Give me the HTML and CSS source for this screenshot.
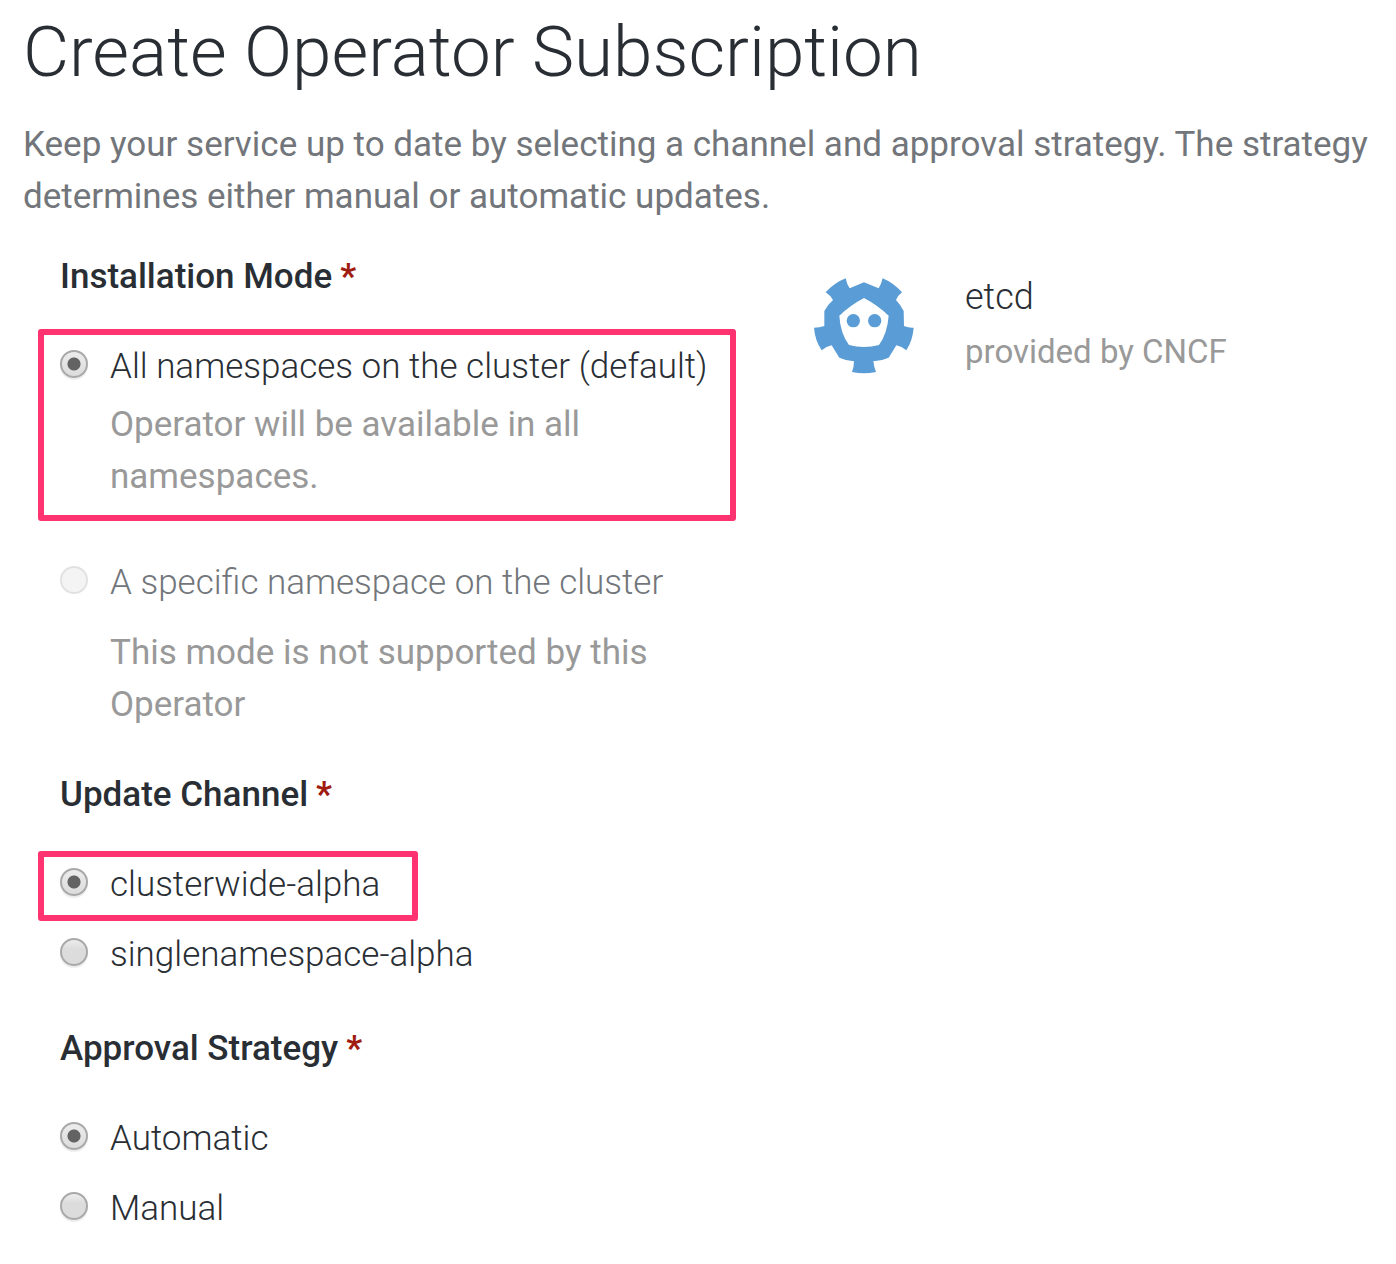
FILE: index.html
```html
<!DOCTYPE html>
<html lang="en">
<head>
<meta charset="utf-8">
<meta name="viewport" content="width=device-width, initial-scale=1">
<title>Create Operator Subscription</title>
<link rel="stylesheet" href="styles.css">
</head>
<body>
<main class="page">
  <h1 class="title">Create Operator Subscription</h1>
  <p class="intro">Keep your service up to date by selecting a channel and approval strategy. The strategy determines either manual or automatic updates.</p>
  <div class="columns">
    <form class="form">
      <fieldset class="group group-mode">
        <legend class="legend">Installation Mode<span class="required">*</span></legend>
        <div class="option highlight highlight-wide">
          <input class="radio" type="radio" name="mode" id="mode-all" checked>
          <div class="option-body">
            <label for="mode-all">All namespaces on the cluster (default)</label>
            <p class="help">Operator will be available in all namespaces.</p>
          </div>
        </div>
        <div class="option option-disabled">
          <input class="radio" type="radio" name="mode" id="mode-one" disabled>
          <div class="option-body">
            <label for="mode-one">A specific namespace on the cluster</label>
            <p class="help">This mode is not supported by this Operator</p>
          </div>
        </div>
      </fieldset>
      <fieldset class="group">
        <legend class="legend">Update Channel<span class="required">*</span></legend>
        <div class="option highlight">
          <input class="radio" type="radio" name="channel" id="channel-cluster" checked>
          <label for="channel-cluster">clusterwide-alpha</label>
        </div>
        <div class="option">
          <input class="radio" type="radio" name="channel" id="channel-single">
          <label for="channel-single">singlenamespace-alpha</label>
        </div>
      </fieldset>
      <fieldset class="group">
        <legend class="legend">Approval Strategy<span class="required">*</span></legend>
        <div class="option">
          <input class="radio" type="radio" name="approval" id="approval-auto" checked>
          <label for="approval-auto">Automatic</label>
        </div>
        <div class="option">
          <input class="radio" type="radio" name="approval" id="approval-manual">
          <label for="approval-manual">Manual</label>
        </div>
      </fieldset>
    </form>
    <aside class="provider">
      <svg class="logo" viewBox="42 36 300 294" role="img" aria-label="etcd logo">
        <path fill="#5a9cd5" fill-rule="evenodd" d="M149 70L192 52L236 70Q244 57 248 40Q281 54 306 82Q295 90 288 105Q302 120 311 138L312 183Q326 189 341 188Q338 226 319 256Q305 244 289 241L266 278Q244 288 220 289Q222 307 228 321Q192 329 156 321Q162 305 162 289Q138 287 118 278L95 241Q79 244 65 256Q45 226 42 188Q58 188 73 183L73 138Q83 119 99 105Q90 90 77 82Q104 53 137 40Q140 57 149 70ZM192 99Q232 120 266 152Q262 205 237 240Q192 252 147 240Q121 205 118 152Q152 120 192 99Z"/>
        <circle cx="160" cy="167" r="20" fill="#5a9cd5"/>
        <circle cx="224" cy="167" r="20" fill="#5a9cd5"/>
      </svg>
      <div>
        <h2 class="name">etcd</h2>
        <p class="vendor">provided by CNCF</p>
      </div>
    </aside>
  </div>
</main>
</body>
</html>
```
FILE: styles.css
```css
* {
  box-sizing: border-box;
}

body {
  margin: 0;
  background: #fff;
  color: #292e34;
  font: 400 35px/52px Roboto, "Liberation Sans", sans-serif;
}

h1, h2, p {
  margin: 0;
  font-weight: inherit;
}

.page {
  padding: 12px 20px 28px 23px;
}

.title {
  font-size: 71px;
  font-weight: 300;
  line-height: 80px;
}

.intro {
  margin-top: 27px;
  color: #72767b;
}

.columns {
  display: grid;
  grid-template-columns: 50% 1fr;
  gap: 96px;
  padding-top: 28px;
  padding-left: 37px;
}

.group {
  min-width: 0;
  margin: 0 0 42px;
  padding: 0;
  border: 0;
}

.group-mode {
  margin-bottom: 38px;
}

.group:last-child {
  margin-bottom: 0;
}

.legend {
  margin-bottom: 38px;
  padding: 0;
  font-weight: 500;
}

.required {
  margin-left: 8px;
  color: #a01b10;
  font-weight: 700;
}

.option {
  display: flex;
  align-items: flex-start;
  gap: 22px;
  margin-bottom: 18px;
}

.option:last-child {
  margin-bottom: 0;
}

.option label {
  font-weight: 300;
}

.highlight {
  width: fit-content;
  margin: -8px 0 8px -22px;
  padding: 2px 32px 4px 16px;
  border: 6px solid #ff3370;
  border-radius: 3px;
}

.highlight-wide {
  width: auto;
  margin: -12px -18px 36px -22px;
  padding: 6px 16px 12px;
}

.radio {
  appearance: none;
  flex: none;
  width: 28px;
  height: 28px;
  margin: 9px 0 0;
  border: 2px solid #a9a9a9;
  border-radius: 50%;
  background: linear-gradient(#ececec, #dcdcdc 40%);
  box-shadow: 0 2px 1px #ededed;
}

.radio:checked {
  background: radial-gradient(circle, #636363 6px, transparent 7px), linear-gradient(#ececec, #dcdcdc);
}

.radio:disabled {
  border-color: #e2e2e2;
  background: #f4f4f4;
  box-shadow: none;
}

.help {
  margin-top: 6px;
  color: #999;
}

.option-disabled {
  color: #72767b;
}

.option-disabled .help {
  margin-top: 18px;
}

.provider {
  display: flex;
  align-items: flex-start;
  gap: 51px;
  padding-top: 20px;
}

.logo {
  flex: none;
  width: 100px;
  margin-top: 6px;
}

.name {
  font-size: 36px;
  font-weight: 300;
}

.vendor {
  margin-top: 3px;
  color: #999;
  font-size: 33px;
}
```
